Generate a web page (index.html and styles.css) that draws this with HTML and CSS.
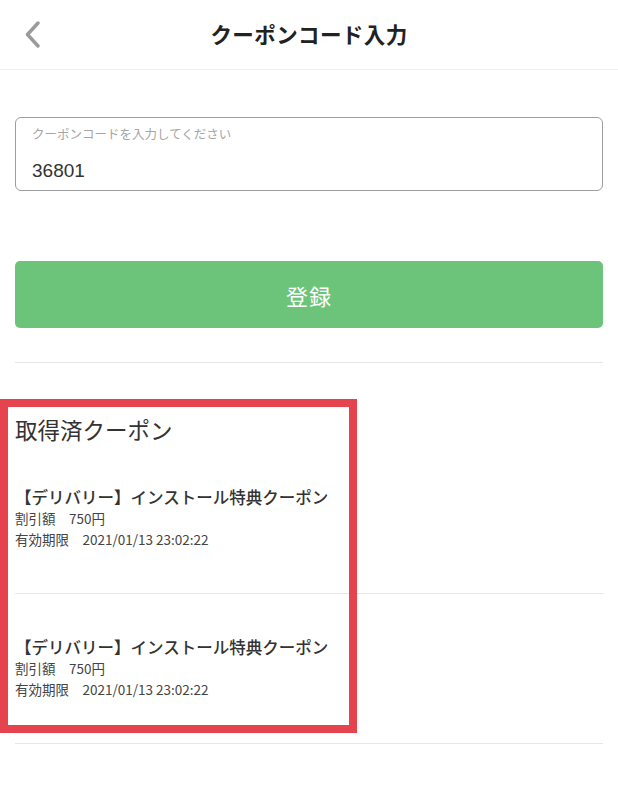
FILE: index.html
```html
<!DOCTYPE html>
<html lang="ja">
<head>
<meta charset="utf-8">
<title>クーポンコード入力</title>
<link rel="stylesheet" href="styles.css">
</head>
<body>
<div class="page">
  <header class="header">
    <a class="back" aria-label="戻る">
      <svg width="17" height="27" viewBox="0 0 17 27"><path d="M14 2 L3.5 13.5 L14 25" fill="none" stroke="#9a9a9a" stroke-width="3.4" stroke-linecap="round" stroke-linejoin="round"/></svg>
    </a>
    <h1 class="title">クーポンコード入力</h1>
    <span class="spacer"></span>
  </header>
  <main class="main">
    <div class="field">
      <div class="field-label">クーポンコードを入力してください</div>
      <div class="field-value">36801</div>
    </div>
    <button class="submit">登録</button>
    <div class="divider"></div>
    <section class="coupons">
      <h2 class="coupons-title">取得済クーポン</h2>
      <div class="coupon">
        <div class="coupon-name">【デリバリー】インストール特典クーポン</div>
        <div class="coupon-line">割引額　750円</div>
        <div class="coupon-line">有効期限　2021/01/13 23:02:22</div>
      </div>
      <div class="coupon">
        <div class="coupon-name">【デリバリー】インストール特典クーポン</div>
        <div class="coupon-line">割引額　750円</div>
        <div class="coupon-line">有効期限　2021/01/13 23:02:22</div>
      </div>
    </section>
  </main>
  <div class="highlight"></div>
</div>
</body>
</html>
```
FILE: styles.css
```css
* { box-sizing: border-box; }
html, body { margin: 0; padding: 0; background: #fff; }
body {
  font-family: "Noto Sans CJK JP", "Noto Sans", sans-serif;
  color: #333;
}
.page {
  position: relative;
  width: 618px;
  min-height: 800px;
}
.header {
  height: 70px;
  border-bottom: 1px solid #efefef;
  display: grid;
  grid-template-columns: 1fr auto 1fr;
  align-items: center;
}
.back {
  display: flex;
  align-items: center;
  padding-left: 24px;
  padding-bottom: 1px;
}
.title {
  margin: 0;
  font-size: 21.5px;
  font-weight: 700;
  color: #222;
  letter-spacing: 0.4px;
  line-height: 30px;
  padding-bottom: 1px;
}
.main {
  padding: 0 15px;
}
.field {
  margin-top: 47px;
  height: 74px;
  border: 1.5px solid #9d9d9d;
  border-radius: 6px;
  padding: 6px 16px 0;
}
.field-label {
  font-size: 12.5px;
  color: #a5a5a5;
  line-height: 20px;
}
.field-value {
  margin-top: 16px;
  font-family: "Liberation Sans", "Noto Sans CJK JP", sans-serif;
  font-size: 19px;
  color: #333;
  line-height: 22px;
}
.submit {
  display: block;
  width: 100%;
  margin-top: 70px;
  height: 67px;
  border: none;
  border-radius: 5px;
  background: #6cc47a;
  color: #fff;
  font-family: "Noto Sans CJK JP", sans-serif;
  font-size: 22px;
  letter-spacing: 1px;
}
.divider {
  margin-top: 34px;
  height: 1px;
  background: #e6e6e6;
}
.coupons-title {
  margin: 51px 0 0;
  font-size: 22.5px;
  font-weight: 400;
  line-height: 30px;
  color: #333;
}
.coupon {
  padding: 42px 0 43px;
  border-bottom: 1px solid #e6e6e6;
}
.coupon-name {
  font-size: 16.5px;
  font-weight: 500;
  line-height: 22px;
  color: #333;
}
.coupon-line {
  font-size: 13.5px;
  line-height: 21px;
  color: #444;
}
.highlight {
  position: absolute;
  left: 0;
  top: 399px;
  width: 357px;
  height: 334px;
  border: 8px solid #e5444f;
  pointer-events: none;
}
```
